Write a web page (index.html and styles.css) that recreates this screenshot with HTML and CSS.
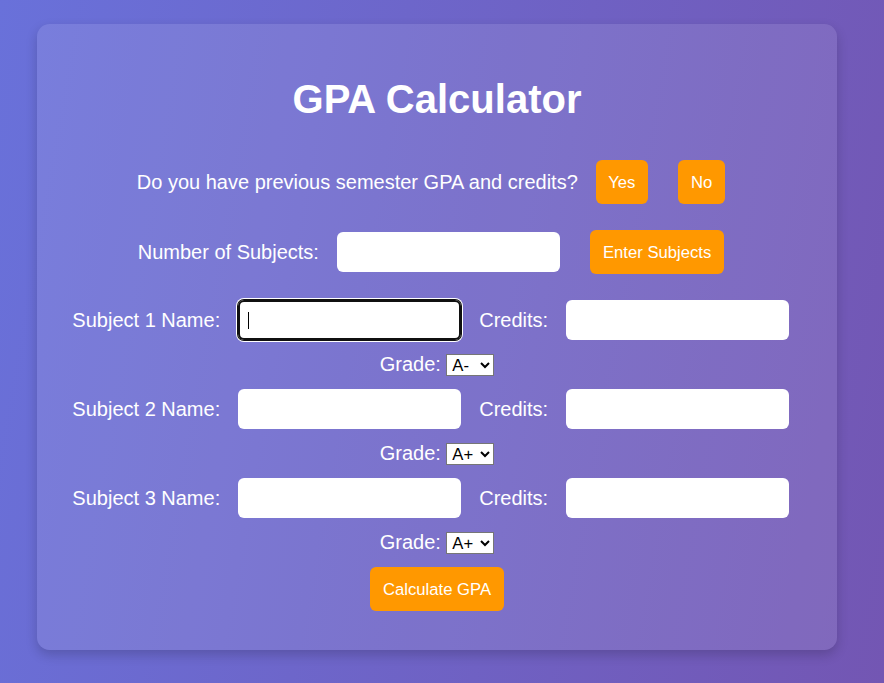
FILE: index.html
```html
<!DOCTYPE html>
<html lang="en">
<head>
<meta charset="utf-8">
<title>GPA Calculator</title>
<link rel="stylesheet" href="styles.css">
</head>
<body>
  <main class="card">
    <h1 class="title">GPA Calculator</h1>

    <div class="row row--question">
      <span class="label">Do you have previous semester GPA and credits?</span>
      <button class="btn" type="button">Yes</button>
      <button class="btn" type="button">No</button>
    </div>

    <div class="row row--count">
      <span class="label">Number of Subjects:</span>
      <input class="field" type="number">
      <button class="btn" type="button">Enter Subjects</button>
    </div>

    <div class="subject">
      <div class="row row--subject">
        <span class="label">Subject 1 Name:</span>
        <input class="field field--focused" type="text">
        <span class="label">Credits:</span>
        <input class="field" type="number">
      </div>
      <div class="row row--grade">
        <span class="label">Grade:</span>
        <select class="grade">
          <option>A+</option><option>A</option><option selected>A-</option><option>B+</option><option>B</option><option>B-</option><option>C+</option><option>C</option><option>C-</option><option>D</option><option>F</option>
        </select>
      </div>
    </div>

    <div class="subject">
      <div class="row row--subject">
        <span class="label">Subject 2 Name:</span>
        <input class="field" type="text">
        <span class="label">Credits:</span>
        <input class="field" type="number">
      </div>
      <div class="row row--grade">
        <span class="label">Grade:</span>
        <select class="grade">
          <option selected>A+</option><option>A</option><option>A-</option><option>B+</option><option>B</option><option>B-</option><option>C+</option><option>C</option><option>C-</option><option>D</option><option>F</option>
        </select>
      </div>
    </div>

    <div class="subject">
      <div class="row row--subject">
        <span class="label">Subject 3 Name:</span>
        <input class="field" type="text">
        <span class="label">Credits:</span>
        <input class="field" type="number">
      </div>
      <div class="row row--grade">
        <span class="label">Grade:</span>
        <select class="grade">
          <option selected>A+</option><option>A</option><option>A-</option><option>B+</option><option>B</option><option>B-</option><option>C+</option><option>C</option><option>C-</option><option>D</option><option>F</option>
        </select>
      </div>
    </div>

    <div class="row row--calc">
      <button class="btn" type="button">Calculate GPA</button>
    </div>
  </main>
</body>
</html>
```

FILE: styles.css
```css
html {
  height: 100%;
}

body {
  margin: 0;
  min-height: 100%;
  padding-top: 24px;
  box-sizing: border-box;
  background: linear-gradient(100deg, #6971da 0%, #7356b3 100%);
  font-family: "Liberation Sans", Arial, sans-serif;
  color: #fff;
}

.card {
  width: 800px;
  margin-left: 37px;
  box-sizing: border-box;
  padding: 52px 0 39px;
  background: rgba(255, 255, 255, 0.1);
  border-radius: 12.5px;
  box-shadow: 0 5px 12px rgba(0, 0, 0, 0.18);
}

.title {
  margin: 0 0 38px;
  font-size: 40px;
  line-height: 46px;
  font-weight: bold;
  text-align: center;
}

.row {
  display: flex;
  justify-content: center;
  align-items: center;
  gap: 5.5px;
}

.row--question {
  height: 44px;
  margin-bottom: 26px;
}

.row--count {
  height: 44px;
  margin-bottom: 26px;
}

.row--subject {
  height: 40px;
}

.row--grade {
  height: 49px;
}

.row--calc {
  height: 44px;
}

.label {
  font-size: 20px;
  line-height: 23px;
  white-space: nowrap;
}

.btn {
  margin: 0 12.5px;
  padding: 12.5px;
  border: none;
  border-radius: 6px;
  background: #ff9800;
  color: #fff;
  font-family: "Liberation Sans", Arial, sans-serif;
  font-size: 16.67px;
  line-height: 19px;
  cursor: pointer;
}

.field {
  width: 223px;
  height: 40px;
  margin: 0 12.5px;
  padding: 0 10px;
  box-sizing: border-box;
  border: none;
  border-radius: 6px;
  background: #fff;
  font-family: "Liberation Sans", Arial, sans-serif;
  font-size: 16.67px;
  color: #000;
  outline: none;
}

.field:focus {
  outline: none;
}

.field--focused {
  background: linear-gradient(#000, #000) no-repeat 10px center / 1px 17px, #fff;
  box-shadow: 0 0 0 1px #101010, 0 0 0 2px #fff, inset 0 0 0 2px #101010;
}

.grade {
  height: 22px;
  width: 48px;
  padding: 0 1px;
  box-sizing: border-box;
  border: 1px solid #767676;
  border-radius: 0;
  background: #fff;
  color: #000;
  font-family: "Liberation Sans", Arial, sans-serif;
  font-size: 16.67px;
}
```
